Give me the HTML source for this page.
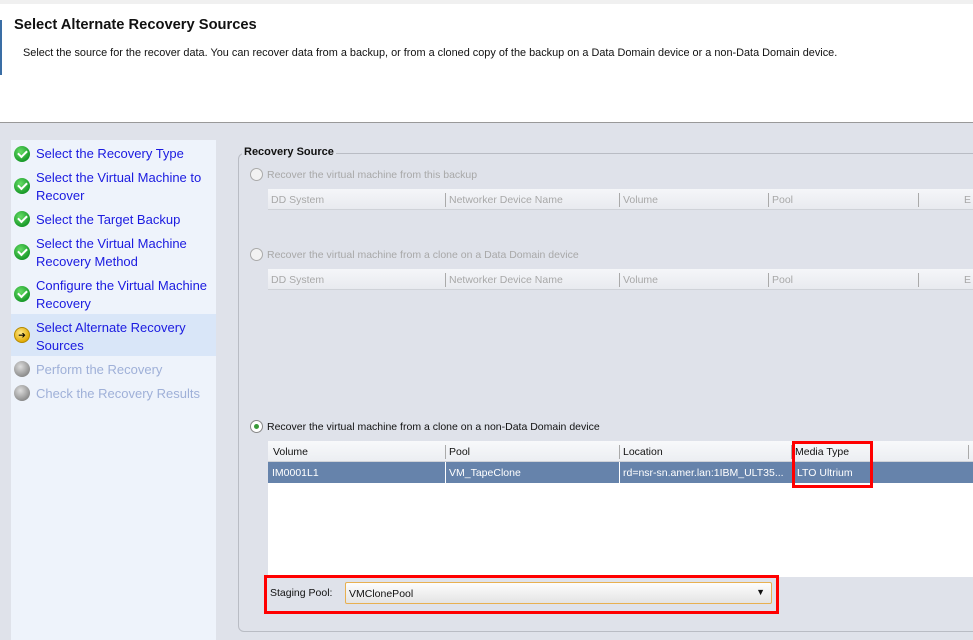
<!DOCTYPE html>
<html><head><style>
*{margin:0;padding:0;box-sizing:border-box}
body{width:973px;height:640px;overflow:hidden;background:#dfe2ea;font-family:"Liberation Sans",Arial,sans-serif;position:relative}
.a{position:absolute}
.hdr{left:0;top:4px;width:973px;height:119px;background:#fff;border-bottom:1px solid #999}
.nav{left:11px;top:140px;width:205px;height:500px;background:#eef3fb}
.it{position:absolute;left:25px;font-size:13px;color:#1a1ae0;line-height:18px;white-space:nowrap}
.ic{position:absolute;left:3px;width:16px;height:16px;border-radius:50%}
.g{background:radial-gradient(circle at 40% 35%,#6d6,#1a9a2a 70%);}
.g::after{content:"";position:absolute;left:4px;top:4px;width:7px;height:4px;border-left:2px solid #fff;border-bottom:2px solid #fff;transform:rotate(-45deg)}
.gr{background:radial-gradient(circle at 40% 35%,#ddd,#888 75%)}
.y{background:radial-gradient(circle at 40% 35%,#ffe98a,#e0a800 75%);border:1px solid #b58a00}
.dis{color:#9fb0d8}
.box{left:238px;top:153px;width:760px;height:479px;border:1px solid #b9bcc4;border-radius:6px}
.th{position:absolute;height:21px;background:linear-gradient(#f5f6f9,#e8eaef);border-bottom:1px solid #cfd2d8;font-size:10.5px;color:#a8a8a8}
.th span{position:absolute;top:4px;padding-left:3px;border-left:1px solid #aaa;height:14px;line-height:14px}
.rad{position:absolute;width:13px;height:13px;border-radius:50%;border:1px solid #aaa;background:#f2f2f2}
.lbl{position:absolute;font-size:10.5px;color:#a8a8a8}
</style></head><body>
<div class="a" style="left:0;top:0;width:973px;height:4px;background:#f0f0f0"></div>
<div class="a hdr"></div>
<div class="a" style="left:0;top:20px;width:2px;height:55px;background:#3a6ea5"></div>
<div class="a" style="left:14px;top:17px;font-size:14.7px;font-weight:bold;color:#111">Select Alternate Recovery Sources</div>
<div class="a" style="left:23px;top:47px;font-size:10.9px;color:#111">Select the source for the recover data. You can recover data from a backup, or from a cloned copy of the backup on a Data Domain device or a non-Data Domain device.</div>

<div class="a nav">
<div class="a" style="left:0;top:174px;width:205px;height:42px;background:#d9e6f8"></div>
<div class="ic g" style="top:6px"></div><div class="it" style="top:5px">Select the Recovery Type</div>
<div class="ic g" style="top:38px"></div><div class="it" style="top:29px">Select the Virtual Machine to<br>Recover</div>
<div class="ic g" style="top:71px"></div><div class="it" style="top:71px">Select the Target Backup</div>
<div class="ic g" style="top:104px"></div><div class="it" style="top:95px">Select the Virtual Machine<br>Recovery Method</div>
<div class="ic g" style="top:146px"></div><div class="it" style="top:137px">Configure the Virtual Machine<br>Recovery</div>
<div class="ic y" style="top:187px;font-size:9px;line-height:14px;text-align:center">➔</div><div class="it" style="top:179px">Select Alternate Recovery<br>Sources</div>
<div class="ic gr" style="top:221px"></div><div class="it dis" style="top:221px">Perform the Recovery</div>
<div class="ic gr" style="top:245px"></div><div class="it dis" style="top:245px">Check the Recovery Results</div>
</div>

<div class="a box"></div>
<div class="a" style="left:242px;top:146px;background:#dfe2ea;padding:0 2px;font-size:11px;font-weight:bold;color:#111">Recovery Source</div>

<div class="rad" style="left:250px;top:168px"></div>
<div class="lbl" style="left:267px;top:169px">Recover the virtual machine from this backup</div>
<div class="th" style="left:268px;top:189px;width:705px"><span style="left:0;border:none">DD System</span><span style="left:177px">Networker Device Name</span><span style="left:351px">Volume</span><span style="left:500px">Pool</span><span style="left:650px;padding-left:45px">E</span></div>

<div class="rad" style="left:250px;top:248px"></div>
<div class="lbl" style="left:267px;top:249px">Recover the virtual machine from a clone on a Data Domain device</div>
<div class="th" style="left:268px;top:269px;width:705px"><span style="left:0;border:none">DD System</span><span style="left:177px">Networker Device Name</span><span style="left:351px">Volume</span><span style="left:500px">Pool</span><span style="left:650px;padding-left:45px">E</span></div>

<div class="rad" style="left:250px;top:420px;background:#fff;border-color:#888"><div style="position:absolute;left:3px;top:3px;width:5px;height:5px;border-radius:50%;background:#3a9a3a"></div></div>
<div class="lbl" style="left:267px;top:421px;color:#111">Recover the virtual machine from a clone on a non-Data Domain device</div>
<div class="a" style="left:268px;top:441px;width:705px;height:136px;background:#fff"></div>
<div class="th" style="left:268px;top:441px;width:705px;height:21px;color:#111;background:linear-gradient(#f8f9fb,#eceef2)"><span style="left:2px;border:none">Volume</span><span style="left:177px">Pool</span><span style="left:351px">Location</span><span style="left:523px">Media Type</span><span style="left:700px"> </span></div>
<div class="a" style="left:268px;top:462px;width:705px;height:21px;background:#6683ab;font-size:10.5px;color:#fff">
<span class="a" style="left:4px;top:5px">IM0001L1</span>
<span class="a" style="left:177px;top:0;height:21px;border-left:1px solid #fff;padding:5px 3px">VM_TapeClone</span>
<span class="a" style="left:351px;top:0;height:21px;border-left:1px solid #fff;padding:5px 3px">rd=nsr-sn.amer.lan:1IBM_ULT35...</span>
<span class="a" style="left:523px;top:5px;padding-left:6px">LTO Ultrium</span>
</div>
<div class="a" style="left:792px;top:441px;width:81px;height:47px;border:3px solid #f00"></div>

<div class="a" style="left:264px;top:575px;width:515px;height:39px;border:3px solid #f00"></div>
<div class="a" style="left:270px;top:587px;font-size:10.5px;color:#111">Staging Pool:</div>
<div class="a" style="left:345px;top:582px;width:427px;height:22px;border:1px solid #e8b050;border-radius:2px;background:linear-gradient(#fdfdfd,#e4e4e4);font-size:10.5px;color:#111;padding:5px 3px">VMClonePool<span class="a" style="right:6px;top:4px;font-size:9px">▼</span></div>
</body></html>
